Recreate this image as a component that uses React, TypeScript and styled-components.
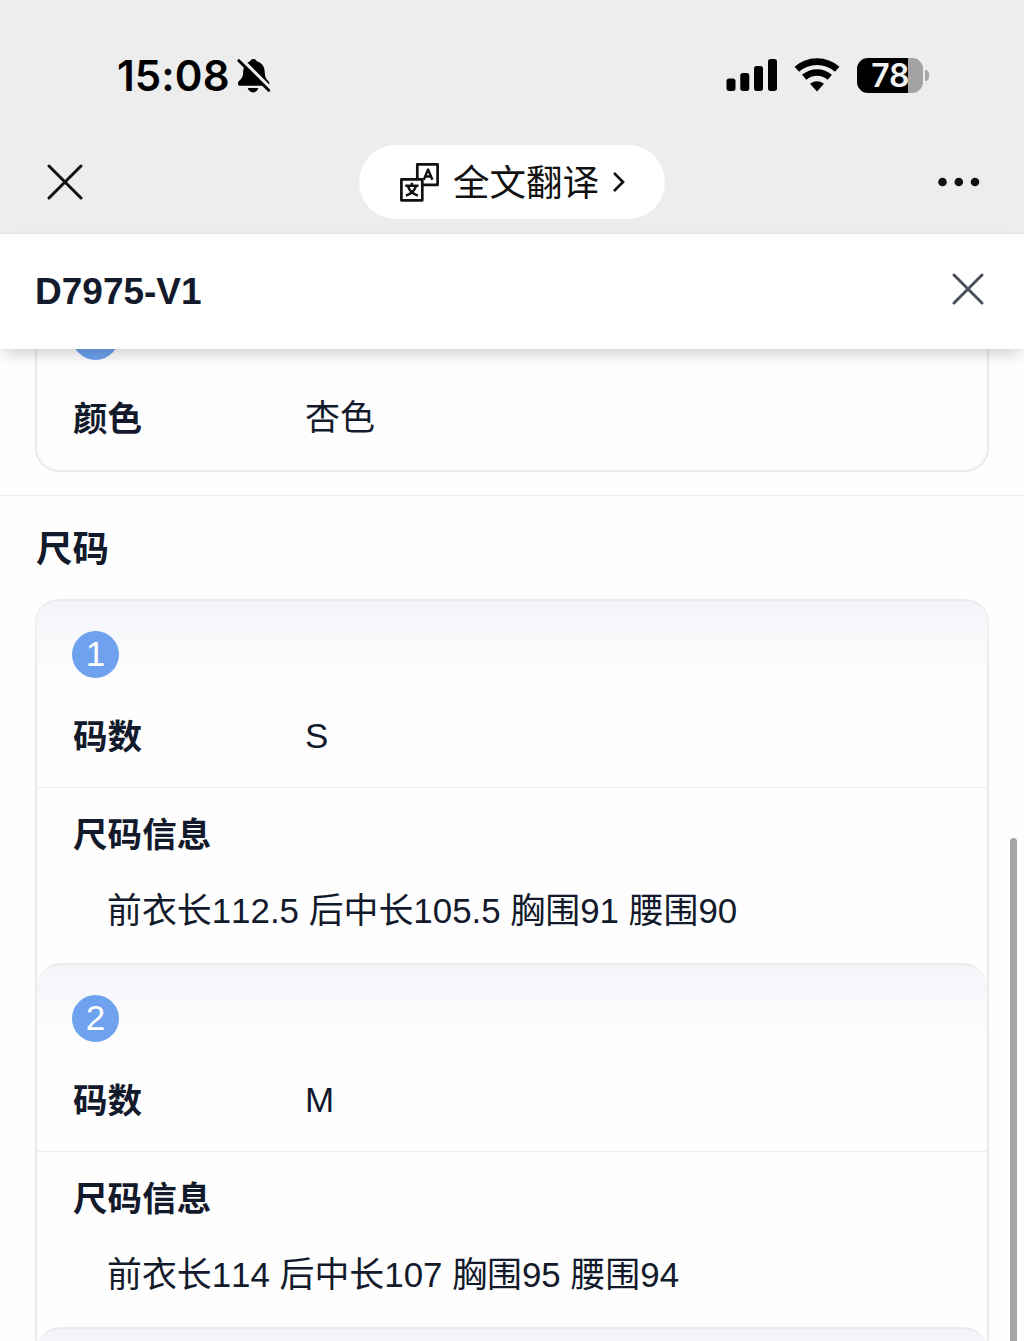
import React from "react";
import styled, { createGlobalStyle } from "styled-components";

const Global = createGlobalStyle`
  * { box-sizing: border-box; }
  html, body { margin: 0; padding: 0; background: #fff; }
  body { overflow: hidden; }
`;

const Screen = styled.div`
  position: relative;
  display: flex;
  flex-direction: column;
  width: 1024px;
  height: 1341px;
  overflow: hidden;
  background: #fefefe;
  color: #131a2c;
  font-family: "Liberation Sans", "Noto Sans CJK SC", sans-serif;
  font-kerning: none;
`;

const StatusBar = styled.header`
  display: flex;
  justify-content: space-between;
  align-items: center;
  flex: none;
  height: 131px;
  padding: 20px 95px 0 117px;
  background: #ededed;
  color: #000;
`;

const StatusGroup = styled.div<{ $gap: number }>`
  display: flex;
  align-items: center;
  gap: ${(p) => p.$gap}px;
`;

const Clock = styled.span`
  width: 111px;
  font: 575 42px/50px Inter, sans-serif;
  letter-spacing: 0.1px;
  white-space: nowrap;
`;

const Battery = styled.div`
  display: flex;
  align-items: center;
  gap: 2px;
`;

const BatteryBody = styled.div`
  display: flex;
  align-items: center;
  justify-content: flex-end;
  width: 66px;
  height: 35px;
  padding-right: 14px;
  border-radius: 11px;
  background: linear-gradient(90deg, #000 0 51px, #a3a3a3 51px);
  color: #f2f2f2;
  font: 600 32px/33px Inter, sans-serif;
  letter-spacing: -0.4px;
`;

const BatteryTip = styled.i`
  width: 4px;
  height: 11px;
  border-radius: 0 5px 5px 0;
  background: #a8a8a8;
`;

const NavBar = styled.nav`
  display: flex;
  justify-content: space-between;
  align-items: center;
  flex: none;
  height: 103px;
  padding: 0 44px 0 47px;
  background: #ededed;
  border-bottom: 1px solid #e3e3e3;
`;

const NavSide = styled.div<{ $end?: boolean }>`
  display: flex;
  width: 42px;
  justify-content: ${(p) => (p.$end ? "flex-end" : "flex-start")};
`;

const TranslatePill = styled.button`
  display: flex;
  align-items: center;
  width: 306px;
  height: 74px;
  margin: 0 3px 0 0;
  padding: 0 0 0 41px;
  border: 0;
  border-radius: 37px;
  background: #fff;
  color: #111;
  font: 400 36.5px/50px "Noto Sans CJK SC", sans-serif;
  white-space: nowrap;
`;

const PillLabel = styled.span`
  margin: -2px 13px 0 14px;
`;

const TitleBar = styled.div`
  position: relative;
  z-index: 1;
  display: flex;
  justify-content: space-between;
  align-items: center;
  flex: none;
  height: 115px;
  padding: 0 40px 0 35px;
  background: #fff;
  box-shadow: 0 8px 16px -4px rgba(0, 0, 0, 0.2);
`;

const Title = styled.h1`
  margin: 0;
  font-size: 37px;
  line-height: 44px;
  font-weight: 700;
  font-kerning: normal;
`;

const CloseButton = styled.button`
  display: flex;
  margin: 0 0 5px;
  padding: 0;
  border: 0;
  background: none;
`;

const Scroller = styled.main`
  flex: 1;
  min-height: 0;
  overflow: hidden;
`;

const ScrolledContent = styled.div`
  margin-top: -68px;
`;

const Section = styled.section`
  padding: 0 35px 23px;
  border-bottom: 1px solid #ececec;
`;

const SectionTitle = styled.h2`
  height: 103px;
  margin: 0;
  padding: 28px 0 0 1px;
  font-size: 36.5px;
  line-height: 52px;
  font-weight: 700;
`;

const Card = styled.div`
  border: 2px solid #e9eaea;
  border-top: 0;
  border-radius: 24px;
`;

const Item = styled.article<{ $first?: boolean }>`
  margin: ${(p) => (p.$first ? "0 -2px" : "0")};
  padding: ${(p) => (p.$first ? "0 2px" : "0")};
  border-top: 2px solid #e9ebec;
  border-radius: 24px 24px 0 0;
  background: linear-gradient(#f3f5f9, rgba(255, 255, 255, 0) 82px);
`;

const Badge = styled.div`
  display: flex;
  justify-content: center;
  width: 47px;
  height: 47px;
  margin-left: 35px;
  border-radius: 50%;
  background: #6ea1ee;
  color: #fff;
  font-size: 35px;
  line-height: 45px;
`;

const ItemHead = styled.div`
  padding-top: 30px;
`;

const FieldRow = styled.div<{ $last?: boolean }>`
  display: grid;
  grid-template-columns: 233px 1fr;
  height: 110px;
  padding: 32px 35px 0;
  border-bottom: ${(p) => (p.$last ? 0 : 1)}px solid #ebecee;
  font-size: 35px;
  line-height: 52px;
`;

const Label = styled.div`
  padding: 1px 0 0 1px;
  font-size: 34.6px;
  line-height: 52px;
  font-weight: 700;
`;

const Detail = styled.div`
  height: 175px;
  padding: 20px 35px 0;
`;

const DetailText = styled.p`
  margin: 24px 0 0 35px;
  font-size: 34.9px;
  line-height: 52px;
  white-space: pre;
`;

const ScrollThumb = styled.i`
  position: absolute;
  z-index: 2;
  top: 838px;
  right: 7px;
  width: 7px;
  height: 520px;
  border-radius: 4px;
  background: #a5a5a5;
`;

const sizes = [
  { name: "S", info: "前衣长112.5 后中长105.5 胸围91 腰围90" },
  { name: "M", info: "前衣长114 后中长107 胸围95 腰围94" },
];

const MutedBell = () => (
  <svg width="34" height="36" viewBox="0 0 34 36">
    <path
      d="M16.500 1c1.800 0 2.800 1 3.200 2.200 5.300 1.500 7.800 5.400 8 10.300.2 5 1 7.300 3.800 9.700 1.400 1.200 1.100 4.600-1.200 4.600H3.400C.4 27.800.3 24.300 2.200 22.700c3.300-2.600 3.800-5 4-9.200.3-4.900 2.500-8.700 7-10.300.5-1.300 1.500-2.200 3.300-2.200z"
      fill="#000"
    />
    <path d="M10.700 30h10.600c-.8 2.900-2.900 4.400-5.200 4.400s-4.500-1.500-5.400-4.400z" fill="#000" />
    <path d="M3.700 1.500L33.500 31.300" stroke="#ededed" strokeWidth="5" />
    <path d="M1.900 2.700L31.700 32.300" stroke="#000" strokeWidth="3" strokeLinecap="round" />
  </svg>
);

const Signal = () => (
  <svg width="51" height="33" viewBox="0 0 51 33">
    <rect x="0.500" y="19.500" width="9" height="12.500" rx="2.700" />
    <rect x="14.300" y="14" width="9" height="18" rx="2.700" />
    <rect x="28" y="7" width="9" height="25" rx="2.700" />
    <rect x="42" y="0" width="9" height="32" rx="2.700" />
  </svg>
);

const Wifi = () => (
  <svg width="46" height="34" viewBox="0 0 46 34" overflow="visible">
    <path d="M2.800 10.300a30.500 30.500 0 0 1 40.400 0" fill="none" stroke="#000" strokeWidth="6.800" />
    <path d="M10.200 18.300a19.500 19.500 0 0 1 25.600 0" fill="none" stroke="#000" strokeWidth="6.600" />
    <path d="M16 24.800q7-4.900 14 0L23 32.500z" />
  </svg>
);

const TranslateIcon = () => (
  <svg width="39" height="39" viewBox="0 0 39 39" fill="none" stroke="#111" strokeWidth="2.700" strokeLinejoin="round">
    <path d="M17.300 16V1.400h20.300v20.400H23" />
    <rect x="1.400" y="16.400" width="20.900" height="20.900" />
    <path d="M23.800 16.700L28.100 6.500l4.300 10.200M25.300 13.500h5.600" strokeWidth="2.400" />
    <path d="M5.300 22.800h13.200M11.900 19.800v2.800M8 23.300c1.500 4.600 4.800 7.600 9.900 9.300M15.900 23.300c-1.500 4.600-4.900 7.600-10 9.300" strokeWidth="2.500" />
  </svg>
);

const Cross = ({ size, color, width }: { size: number; color: string; width: number }) => (
  <svg width={size} height={size} viewBox={`0 0 ${size} ${size}`}>
    <path
      d={`M2 2L${size - 2} ${size - 2}M${size - 2} 2L2 ${size - 2}`}
      stroke={color}
      strokeWidth={width}
      strokeLinecap="round"
    />
  </svg>
);

export default function App() {
  return (
    <Screen>
      <Global />
      <StatusBar>
        <StatusGroup $gap={9}>
          <Clock>15:08</Clock>
          <MutedBell />
        </StatusGroup>
        <StatusGroup $gap={17}>
          <Signal />
          <Wifi />
          <Battery>
            <BatteryBody>78</BatteryBody>
            <BatteryTip />
          </Battery>
        </StatusGroup>
      </StatusBar>
      <NavBar>
        <NavSide>
          <Cross size={36} color="#111" width={3} />
        </NavSide>
        <TranslatePill>
          <TranslateIcon />
          <PillLabel>全文翻译</PillLabel>
          <svg width="13" height="22" viewBox="0 0 13 22">
            <path d="M2 2l9 9-9 9" fill="none" stroke="#111" strokeWidth="2.700" />
          </svg>
        </TranslatePill>
        <NavSide $end>
          <svg width="42" height="10" viewBox="0 0 42 10" fill="#111">
            <circle cx="4.500" cy="5" r="4.300" />
            <circle cx="20.800" cy="5" r="4.300" />
            <circle cx="37" cy="5" r="4.300" />
          </svg>
        </NavSide>
      </NavBar>
      <TitleBar>
        <Title>D7975-V1</Title>
        <CloseButton>
          <Cross size={32} color="#4a4e5c" width={2.9} />
        </CloseButton>
      </TitleBar>
      <Scroller>
        <ScrolledContent>
          <Section>
            <Card>
              <Item $first>
                <ItemHead>
                  <Badge />
                  <FieldRow $last>
                    <Label>颜色</Label>
                    <span>杏色</span>
                  </FieldRow>
                </ItemHead>
              </Item>
            </Card>
          </Section>
          <Section>
            <SectionTitle>尺码</SectionTitle>
            <Card>
              {sizes.map((size, i) => (
                <Item key={size.name} $first={i === 0}>
                  <ItemHead>
                    <Badge>{i + 1}</Badge>
                    <FieldRow>
                      <Label>码数</Label>
                      <span>{size.name}</span>
                    </FieldRow>
                  </ItemHead>
                  <Detail>
                    <Label>尺码信息</Label>
                    <DetailText>{size.info}</DetailText>
                  </Detail>
                </Item>
              ))}
              <Item>
                <ItemHead />
              </Item>
            </Card>
          </Section>
        </ScrolledContent>
      </Scroller>
      <ScrollThumb />
    </Screen>
  );
}
